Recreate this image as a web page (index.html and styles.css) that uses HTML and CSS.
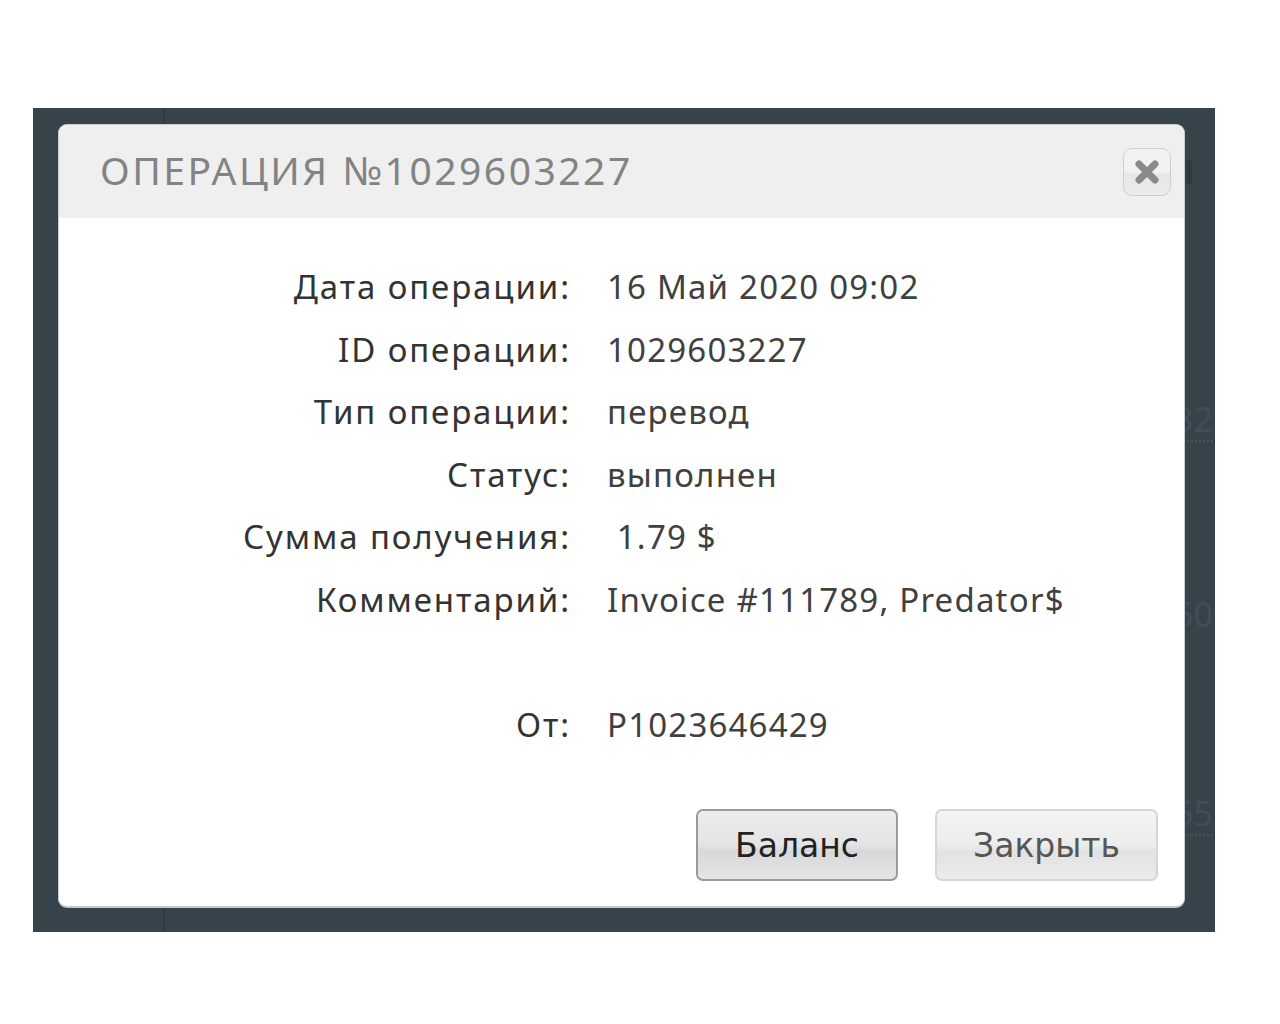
FILE: index.html
```html
<!DOCTYPE html>
<html lang="ru">
<head>
    <meta charset="UTF-8">
    <meta name="viewport" content="width=device-width, initial-scale=1.0">
    <title>Операция №1029603227</title>
    <link rel="stylesheet" href="styles.css">
</head>
<body>

<div class="backdrop">
    <!-- страница под модальным окном -->
    <div class="page-side"></div>
    <div class="page-main">
        <div class="page-row head-row"><span>1</span></div>
        <div class="page-row row-a"><span>832</span></div>
        <div class="page-row row-b"><span>150</span></div>
        <div class="page-row row-c"><span>255</span></div>
    </div>

    <!-- модальное окно операции -->
    <div class="modal">
        <div class="modal-header">
            <h2 class="modal-title">Операция №1029603227</h2>
            <button class="close-btn" title="Закрыть">
                <svg width="28" height="28" viewBox="0 0 28 28">
                    <path d="M6 6 L22 22 M22 6 L6 22" stroke="#8a8a8a" stroke-width="7" stroke-linecap="round"/>
                </svg>
            </button>
        </div>

        <div class="modal-body">
            <div class="info-grid">
                <div class="label">Дата операции:</div>
                <div class="value">16 Май 2020 09:02</div>

                <div class="label">ID операции:</div>
                <div class="value">1029603227</div>

                <div class="label">Тип операции:</div>
                <div class="value">перевод</div>

                <div class="label">Статус:</div>
                <div class="value">выполнен</div>

                <div class="label">Сумма получения:</div>
                <div class="value">&nbsp;1.79 $</div>

                <div class="label">Комментарий:</div>
                <div class="value">Invoice #111789, Predator$</div>

                <div class="label"></div>
                <div class="value"></div>

                <div class="label">От:</div>
                <div class="value">P1023646429</div>
            </div>
        </div>

        <div class="modal-footer">
            <button class="btn btn-primary">Баланс</button>
            <button class="btn">Закрыть</button>
        </div>
    </div>
</div>

</body>
</html>
```

FILE: styles.css
```css
body {
    margin: 0;
    background-color: #fff;
    font-family: 'Noto Sans', 'DejaVu Sans', sans-serif;
}

/* затемнённая область */
.backdrop {
    position: relative;
    margin: 108px 0 0 33px;
    width: 1182px;
    height: 824px;
    background-color: #36434b;
    overflow: hidden;
    display: grid;
    grid-template-columns: 132px 1fr;
}
.page-side {
    border-right: 2px solid #2f3c44;
}
.page-main {
    display: flex;
    flex-direction: column;
}
.page-row {
    text-align: right;
    font-size: 34px;
    color: #414e57;
    margin-right: 2px;
}
.page-row span {
    display: inline-block;
    line-height: 30px;
    padding-bottom: 6px;
}
.head-row {
    margin-top: 40px;
    margin-right: 18px;
    font-weight: bold;
    color: #2d3940;
}
.row-a {
    margin-top: 202px;
}
.row-a span, .row-c span {
    border-bottom: 2px dotted #46535b;
}
.row-b {
    margin-top: 149px;
}
.row-c {
    margin-top: 153px;
}

/* модальное окно */
.modal {
    position: absolute;
    top: 16px;
    left: 25px;
    width: 1127px;
    height: 784px;
    box-sizing: border-box;
    background-color: #fff;
    border: 1px solid #c9cdd0;
    border-bottom: 2px solid #c4c8cb;
    border-radius: 9px;
    overflow: hidden;
    display: flex;
    flex-direction: column;
}
.modal-header {
    height: 93px;
    background-color: #efefef;
    display: flex;
    align-items: center;
    justify-content: space-between;
    padding: 0 13px 0 41px;
}
.modal-title {
    margin: 0 0 5px 0;
    font-family: 'Noto Sans', sans-serif;
    font-weight: normal;
    font-size: 39px;
    letter-spacing: 2.5px;
    text-transform: uppercase;
    color: #838383;
}
.close-btn {
    width: 48px;
    height: 48px;
    border: 1px solid #cfcfcf;
    border-radius: 9px;
    background: linear-gradient(#f2f2f2, #f2f2f2 50%, #e6e6e6 55%, #ececec);
    padding: 0;
    display: flex;
    align-items: center;
    justify-content: center;
    cursor: pointer;
}

.modal-body {
    flex: 1;
    padding-top: 38px;
}
.info-grid {
    display: grid;
    grid-template-columns: 512px 1fr;
    column-gap: 36px;
    grid-auto-rows: 62.6px;
    font-size: 33px;
    line-height: 62.6px;
}
.label {
    text-align: right;
    color: #333;
    letter-spacing: 1.9px;
}
.value {
    color: #404040;
    letter-spacing: 1.2px;
}

.modal-footer {
    display: flex;
    justify-content: flex-end;
    gap: 37px;
    padding: 0 26px 25px 0;
}
.btn {
    height: 72px;
    padding: 0 36px;
    font-family: 'DejaVu Sans', Verdana, sans-serif;
    font-size: 33px;
    color: #555;
    border: 2px solid #d6d6d6;
    border-radius: 7px;
    background: linear-gradient(#f4f4f4, #ececec 50%, #e2e2e2 60%, #ececec);
    cursor: pointer;
}
.btn-primary {
    width: 202px;
    padding: 0;
    color: #222;
    border-color: #9a9a9a;
    background: linear-gradient(#ececec, #e4e4e4 50%, #d8d8d8 60%, #e6e6e6);
}
```
